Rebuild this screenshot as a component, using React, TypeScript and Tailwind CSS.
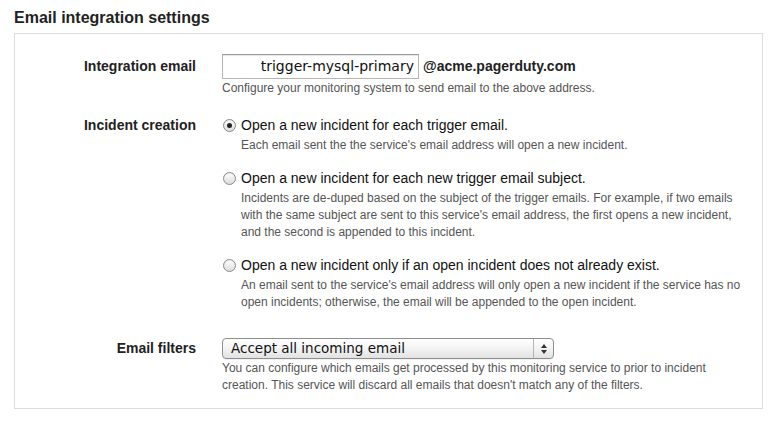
import React from "react";

const sans = "font-['Liberation_Sans',Arial,sans-serif]";
const lucida = "font-['DejaVu_Sans',Verdana,sans-serif]";

interface Option {
  label: string;
  desc: string[];
  checked: boolean;
}

const options: Option[] = [
  {
    label: "Open a new incident for each trigger email.",
    desc: ["Each email sent the the service's email address will open a new incident."],
    checked: true,
  },
  {
    label: "Open a new incident for each new trigger email subject.",
    desc: [
      "Incidents are de-duped based on the subject of the trigger emails. For example, if two emails",
      "with the same subject are sent to this service's email address, the first opens a new incident,",
      "and the second is appended to this incident.",
    ],
    checked: false,
  },
  {
    label: "Open a new incident only if an open incident does not already exist.",
    desc: [
      "An email sent to the service's email address will only open a new incident if the service has no",
      "open incidents; otherwise, the email will be appended to the open incident.",
    ],
    checked: false,
  },
];

const Radio = ({ checked }: { checked: boolean }) => (
  <span className="w-[13px] h-[13px] rounded-full border border-[#8a8a8a] bg-gradient-to-b from-[#ffffff] to-[#dcdcdc] flex items-center justify-center shrink-0 shadow-[inset_0_1px_1px_rgba(0,0,0,0.08)]">
    {checked && <span className="w-[5px] h-[5px] rounded-full bg-[#222]" />}
  </span>
);

const Label = ({ text }: { text: string }) => (
  <div className="w-[207px] pr-[26px] text-right text-[14px] font-bold text-[#222] shrink-0">
    {text}
  </div>
);

export default function App() {
  return (
    <div className={`${sans} bg-white w-[776px] h-[421px] pt-[8px] px-[14px]`}>
      <h2 className="text-[16px] leading-[20px] font-bold text-[#222]">
        Email integration settings
      </h2>
      <div className="mt-[5px] w-[749px] border border-[#dcdcdc] pt-[20px] pb-[14px]">
        {/* integration email */}
        <div className="flex">
          <div className="h-[25px] flex items-center">
            <Label text="Integration email" />
          </div>
          <div>
            <div className="flex items-center">
              <div
                className={`${lucida} w-[197px] h-[25px] border border-[#b5b5b5] border-t-[#9a9a9a] text-right text-[14px] leading-[23px] pr-[4px] text-[#111] shadow-[inset_0_1px_1px_rgba(0,0,0,0.1)]`}
              >
                trigger-mysql-primary
              </div>
              <span className="ml-[4px] text-[14px] font-bold text-[#222]">
                @acme.pagerduty.com
              </span>
            </div>
            <p className="text-[12px] leading-[17px] text-[#555] mt-px">
              Configure your monitoring system to send email to the above address.
            </p>
          </div>
        </div>

        {/* incident creation */}
        <div className="flex mt-[19px]">
          <div className="h-[18px] flex items-center">
            <Label text="Incident creation" />
          </div>
          <div className="flex flex-col gap-[15px]">
            {options.map((o, i) => (
              <div key={i}>
                <div className="flex items-center h-[18px] gap-[5px] pl-px">
                  <Radio checked={o.checked} />
                  <span className="text-[14px] text-[#111]">{o.label}</span>
                </div>
                <div className="pl-[19px] mt-[3px] text-[12px] leading-[17px] text-[#555]">
                  {o.desc.map((d, j) => (
                    <div key={j}>{d}</div>
                  ))}
                </div>
              </div>
            ))}
          </div>
        </div>

        {/* email filters */}
        <div className="flex mt-[27px]">
          <div className="h-[21px] flex items-center">
            <Label text="Email filters" />
          </div>
          <div>
            <div className="w-[332px] h-[21px] rounded-[4px] border border-[#8e8e8e] bg-gradient-to-b from-[#ffffff] via-[#f3f3f3] to-[#e2e2e2] flex items-center shadow-[0_1px_0_rgba(0,0,0,0.05)]">
              <span className={`${lucida} flex-1 pl-[8px] text-[13.5px] text-[#111]`}>
                Accept all incoming email
              </span>
              <span className="w-[20px] h-full border-l border-[#b5b5b5] flex flex-col items-center justify-center gap-[2px]">
                <svg width="6" height="4" viewBox="0 0 6 4">
                  <path d="M3 0 L6 4 L0 4 Z" fill="#333" />
                </svg>
                <svg width="6" height="4" viewBox="0 0 6 4">
                  <path d="M0 0 L6 0 L3 4 Z" fill="#333" />
                </svg>
              </span>
            </div>
            <div className="text-[12px] leading-[17px] text-[#555] mt-px">
              <div>You can configure which emails get processed by this monitoring service to prior to incident</div>
              <div>creation. This service will discard all emails that doesn't match any of the filters.</div>
            </div>
          </div>
        </div>
      </div>
    </div>
  );
}
